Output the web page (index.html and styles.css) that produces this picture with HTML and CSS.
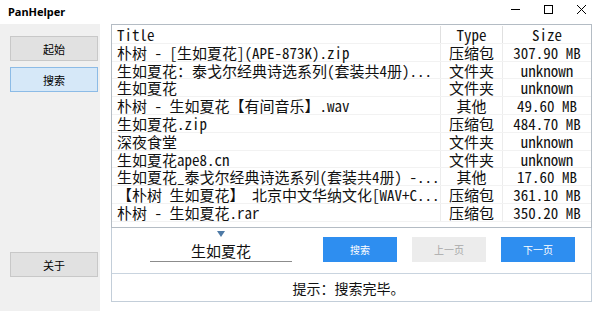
FILE: index.html
```html
<!doctype html>
<html lang="zh-CN">
<head>
	<meta charset="UTF-8">
	<title>PanHelper</title>
	<link rel="stylesheet" href="styles.css">
</head>
<body>
	<div class="window">
		<div class="titlebar">
			<span class="app-name">PanHelper</span>
			<div class="win-ctrls">
				<svg class="ctrl" width="32" height="20" viewBox="0 0 32 20"><path d="M10 9.5h9" stroke="#000" stroke-width="1"/></svg>
				<svg class="ctrl" width="32" height="20" viewBox="0 0 32 20"><rect x="11.5" y="5.5" width="8" height="8" fill="none" stroke="#000" stroke-width="1"/></svg>
				<svg class="ctrl" width="32" height="20" viewBox="0 0 32 20"><path d="M12 5l9 9M21 5l-9 9" stroke="#000" stroke-width="1"/></svg>
			</div>
		</div>
		<div class="main">
			<div class="sidebar">
				<div class="nav">
					<button class="nav-btn">起始</button>
					<button class="nav-btn active">搜索</button>
				</div>
				<button class="nav-btn">关于</button>
			</div>
			<div class="content">
				<div class="list">
					<div class="row head">
						<span class="c-title">Title</span>
						<span class="c-type">Type</span>
						<span class="c-size">Size</span>
					</div>
					<div class="row"><span class="c-title">朴树 - [生如夏花](APE-873K).zip</span><span class="c-type">压缩包</span><span class="c-size">307.90 MB</span></div>
					<div class="row"><span class="c-title">生如夏花：泰戈尔经典诗选系列(套装共4册)...</span><span class="c-type">文件夹</span><span class="c-size">unknown</span></div>
					<div class="row"><span class="c-title">生如夏花</span><span class="c-type">文件夹</span><span class="c-size">unknown</span></div>
					<div class="row"><span class="c-title">朴树 - 生如夏花【有间音乐】.wav</span><span class="c-type">其他</span><span class="c-size">49.60 MB</span></div>
					<div class="row"><span class="c-title">生如夏花.zip</span><span class="c-type">压缩包</span><span class="c-size">484.70 MB</span></div>
					<div class="row"><span class="c-title">深夜食堂</span><span class="c-type">文件夹</span><span class="c-size">unknown</span></div>
					<div class="row"><span class="c-title">生如夏花ape8.cn</span><span class="c-type">文件夹</span><span class="c-size">unknown</span></div>
					<div class="row"><span class="c-title">生如夏花_泰戈尔经典诗选系列(套装共4册) -...</span><span class="c-type">其他</span><span class="c-size">17.60 MB</span></div>
					<div class="row"><span class="c-title">【朴树 生如夏花】 北京中文华纳文化[WAV+C...</span><span class="c-type">压缩包</span><span class="c-size">361.10 MB</span></div>
					<div class="row"><span class="c-title">朴树 - 生如夏花.rar</span><span class="c-type">压缩包</span><span class="c-size">350.20 MB</span></div>
				</div>
				<div class="bottom">
					<div class="controls">
						<div class="search">
							<span class="marker"></span>
							<div class="keyword">生如夏花</div>
						</div>
						<button class="btn blue">搜索</button>
						<button class="btn gray">上一页</button>
						<button class="btn blue">下一页</button>
					</div>
					<div class="status">提示：搜索完毕。</div>
				</div>
			</div>
		</div>
	</div>
</body>
</html>
```
FILE: styles.css
```css
*{
	box-sizing: border-box;
}
body{
	margin: 0;
	font-family: "Microsoft YaHei", "Noto Sans CJK SC", sans-serif;
	background: #fff;
}
.window{
	width: 600px;
	height: 311px;
	display: flex;
	flex-direction: column;
	overflow: hidden;
}
.titlebar{
	height: 24px;
	display: flex;
	justify-content: space-between;
	align-items: flex-start;
	background: #fff;
}
.app-name{
	font-family: "Noto Sans", "Liberation Sans", sans-serif;
	font-weight: bold;
	font-size: 11px;
	margin: 4px 0 0 8px;
}
.win-ctrls{
	display: flex;
	margin-right: 3px;
}
.ctrl{
	display: block;
}
.main{
	flex: 1;
	display: flex;
}
.sidebar{
	width: 100px;
	background: #f0f0f0;
	padding: 12px 2px 34px 10px;
	display: flex;
	flex-direction: column;
	justify-content: space-between;
}
.nav{
	display: flex;
	flex-direction: column;
	gap: 6px;
}
.nav-btn{
	width: 88px;
	height: 25px;
	background: #e1e1e1;
	border: 1px solid #c8c8c8;
	font-family: "Noto Sans CJK SC", sans-serif;
	font-size: 11px;
	color: #000;
	padding: 0;
}
.nav-btn.active{
	background: #d6e8f8;
	border-color: #8cbbe6;
}
.content{
	flex: 1;
	padding: 0 8px 0 11px;
}
.list{
	height: 204px;
	border: 1px solid #b4bcc4;
	padding-top: 1px;
	font-family: "Noto Sans Mono CJK SC", "Liberation Mono", monospace;
	font-size: 15px;
	color: #111;
	display: flex;
	flex-direction: column;
}
.row{
	height: 17.8px;
	line-height: 17.8px;
	display: flex;
	border-bottom: 1px solid #f2f2f2;
	white-space: nowrap;
}
.c-title{
	width: 329px;
	padding-left: 5px;
	border-right: 1px solid #ececec;
}
.c-type{
	width: 62px;
	text-align: center;
	border-right: 1px solid #ececec;
}
.c-size{
	flex: 1;
	text-align: center;
}
.head .c-title,
.head .c-type{
	border-right-color: #e0e0e0;
}
.bottom{
	height: 74px;
	border: 1px solid #c3ced9;
	border-top: none;
	display: flex;
	flex-direction: column;
}
.controls{
	height: 46px;
	display: flex;
	align-items: flex-start;
	padding: 9px 0 0 38px;
	border-bottom: 1px solid #c9d4df;
}
.search{
	width: 142px;
	position: relative;
	margin-right: 31px;
}
.marker{
	position: absolute;
	left: 67px;
	top: -6px;
	border-left: 4px solid transparent;
	border-right: 4px solid transparent;
	border-top: 6px solid #4e7aa6;
}
.keyword{
	height: 25px;
	border-bottom: 1px solid #8c8c8c;
	text-align: center;
	font-size: 15px;
	line-height: 20px;
	padding-top: 4px;
	color: #111;
}
.btn{
	width: 74px;
	height: 25px;
	border: none;
	font-family: "Noto Sans CJK SC", sans-serif;
	font-size: 10px;
	padding: 0;
	margin-right: 15px;
}
.btn.blue{
	background: #2e8ef0;
	color: #fff;
}
.btn.gray{
	background: #ececec;
	color: #a8a8a8;
}
.status{
	flex: 1;
	display: flex;
	align-items: center;
	justify-content: center;
	font-size: 14px;
	color: #111;
	padding-right: 6px;
}
```
